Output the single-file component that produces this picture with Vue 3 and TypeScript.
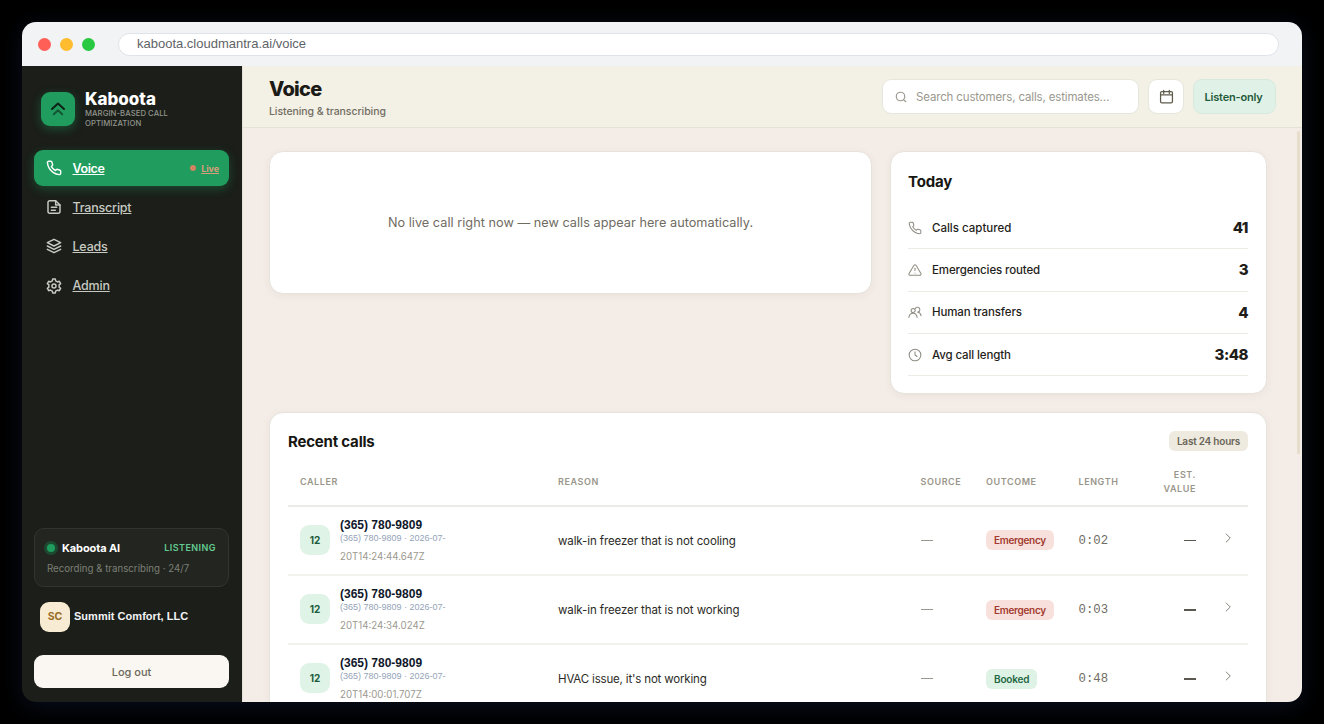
<script setup lang="ts">
interface NavItem { label: string; icon: string[]; live?: boolean }
interface Stat { label: string; value: string; icon: string[]; cls: string }
interface Call { time: string; reason: string; outcome: string; tone: string; length: string; cls: string }

const phone = 'M22 16.92v3a2 2 0 0 1-2.18 2 19.79 19.79 0 0 1-8.63-3.07 19.5 19.5 0 0 1-6-6 19.79 19.79 0 0 1-3.07-8.67A2 2 0 0 1 4.11 2h3a2 2 0 0 1 2 1.72c.127.96.361 1.903.7 2.81a2 2 0 0 1-.45 2.11L8.09 9.91a16 16 0 0 0 6 6l1.27-1.27a2 2 0 0 1 2.11-.45c.907.339 1.85.573 2.81.7A2 2 0 0 1 22 16.92z'

const nav: NavItem[] = [
  { label: 'Voice', icon: [phone], live: true },
  { label: 'Transcript', icon: ['M14.500 2.500H5.500a2.500 2.500 0 0 0-2.500 2.500v14a2.500 2.500 0 0 0 2.500 2.500h13a2.500 2.500 0 0 0 2.500-2.500V9z', 'M14.500 2.500v6.500h6.500', 'M8 12.500h8M8 17h6'] },
  { label: 'Leads', icon: ['M12 2L2 7l10 5 10-5z', 'M2 12l10 5 10-5', 'M2 17l10 5 10-5'] },
  { label: 'Admin', icon: ['M9.500 4.400L10 1.500h4l.5 2.900 2.700 1.550 2.800-1 2 3.450-2.300 1.900v3.400l2.300 1.900-2 3.450-2.800-1-2.700 1.550-.5 2.900h-4l-.5-2.900-2.700-1.550-2.800 1-2-3.450 2.300-1.900v-3.400L2 8.400l2-3.450 2.800 1z', 'M15 12a3 3 0 1 1-6 0 3 3 0 0 1 6 0z'] },
]

const stats: Stat[] = [
  { label: 'Calls captured', value: '41', icon: [phone], cls: 's1' },
  { label: 'Emergencies routed', value: '3', icon: ['M10.290 3.860L1.820 18a2 2 0 0 0 1.710 3h16.940a2 2 0 0 0 1.710-3L13.710 3.860a2 2 0 0 0-3.420 0z', 'M12 9v4', 'M12 17h.01'], cls: 's2' },
  { label: 'Human transfers', value: '4', icon: ['M12.300 9.500a3.500 3.500 0 1 1-7 0 3.500 3.500 0 0 1 7 0z', 'M1.500 21.500c.5-5 3.200-7.500 7.200-7.500s6.400 2.500 6.900 7.500', 'M12.300 6.500a4.200 4.200 0 1 1 4.500 5.700', 'M17.500 12.300c3 .8 4.500 3 4.800 6.200'], cls: 's3' },
  { label: 'Avg call length', value: '3:48', icon: ['M22 12a10 10 0 1 1-20 0 10 10 0 0 1 20 0z', 'M12 6.500V12l3.500 2.500'], cls: 's4' },
]

const calls: Call[] = [
  { time: '20T14:24:44.647Z', reason: 'walk-in freezer that is not cooling', outcome: 'Emergency', tone: 'red', length: '0:02', cls: 'r1' },
  { time: '20T14:24:34.024Z', reason: 'walk-in freezer that is not working', outcome: 'Emergency', tone: 'red', length: '0:03', cls: 'r2' },
  { time: '20T14:00:01.707Z', reason: "HVAC issue, it's not working", outcome: 'Booked', tone: 'green', length: '0:48', cls: 'r3' },
]
</script>

<template>
  <div class="stage">
    <div class="window">
      <div class="chrome">
        <i class="dot d-red"></i><i class="dot d-yellow"></i><i class="dot d-green"></i>
        <div class="url"><span>kaboota.cloudmantra.ai/voice</span></div>
      </div>
      <div class="app">
        <aside class="side">
          <div class="brand">
            <div class="logo">
              <svg width="18" height="18" viewBox="0 0 18 18">
                <path d="M3 9L9 3.600l6 5.400" stroke="#0d2217" stroke-width="2" />
                <path d="M4.800 14.200L9 10.300l4.200 3.900" stroke="#145534" stroke-width="2" />
              </svg>
            </div>
            <div>
              <div class="brand-name"><span>Kaboota</span></div>
              <div class="brand-sub"><span>MARGIN-BASED CALL</span><br /><span>OPTIMIZATION</span></div>
            </div>
          </div>
          <nav>
            <a v-for="n in nav" :key="n.label" class="nav-item" :class="{ active: n.live }">
              <svg class="nav-icon" viewBox="0 0 24 24"><path v-for="d in n.icon" :key="d" :d="d" /></svg>
              <span class="nav-label">{{ n.label }}</span>
              <span v-if="n.live" class="live"><i></i><span>Live</span></span>
            </a>
          </nav>
          <div class="status">
            <div class="status-top">
              <i class="pulse"></i><span class="status-name">Kaboota AI</span><span class="listening">LISTENING</span>
            </div>
            <div class="status-sub"><span>Recording &amp; transcribing · 24/7</span></div>
          </div>
          <div class="org"><div class="org-avatar">SC</div><span class="org-name">Summit Comfort, LLC</span></div>
          <button class="logout"><span>Log out</span></button>
        </aside>

        <main class="main">
          <header class="top">
            <div>
              <h1><span>Voice</span></h1>
              <div class="sub"><span>Listening &amp; transcribing</span></div>
            </div>
            <div class="tools">
              <div class="search">
                <svg viewBox="0 0 24 24"><circle cx="11" cy="11" r="8.500" /><path d="M21.500 21.500l-4.300-4.300" /></svg>
                <span>Search customers, calls, estimates…</span>
              </div>
              <div class="cal">
                <svg viewBox="0 0 24 24"><rect x="2.500" y="4" width="19" height="18" rx="2" /><path d="M2.500 9.500h19M7.500 2v5M16.500 2v5" /></svg>
              </div>
              <div class="listen"><span>Listen-only</span></div>
            </div>
          </header>

          <div class="content">
            <div class="row">
              <section class="card empty"><span>No live call right now — new calls appear here automatically.</span></section>
              <section class="card today">
                <h2><span>Today</span></h2>
                <div v-for="s in stats" :key="s.label" class="stat">
                  <svg viewBox="0 0 24 24"><path v-for="d in s.icon" :key="d" :d="d" /></svg>
                  <span class="stat-label" :class="s.cls">{{ s.label }}</span>
                  <b>{{ s.value }}</b>
                </div>
              </section>
            </div>

            <section class="card recent">
              <div class="recent-head">
                <h2><span>Recent calls</span></h2>
                <span class="chip"><span>Last 24 hours</span></span>
              </div>
              <div class="grid thead">
                <span>CALLER</span><span>REASON</span><span>SOURCE</span><span>OUTCOME</span><span>LENGTH</span>
                <span class="est">EST.<br />VALUE</span><span></span>
              </div>
              <div v-for="c in calls" :key="c.time" class="grid trow">
                <div class="caller">
                  <div class="num">12</div>
                  <div class="who">
                    <div class="phone"><span>(365) 780-9809</span></div>
                    <div class="meta"><span>(365) 780-9809 · 2026-07-</span></div>
                    <div class="time"><span>{{ c.time }}</span></div>
                  </div>
                </div>
                <div class="reason"><span :class="c.cls">{{ c.reason }}</span></div>
                <div><i class="dash"></i></div>
                <div class="outcome"><span class="tag" :class="c.tone">{{ c.outcome }}</span></div>
                <div class="len">{{ c.length }}</div>
                <div class="value"><i class="dash dark"></i></div>
                <svg class="chev" viewBox="0 0 24 24"><path d="M8.500 4l8 8-8 8" /></svg>
              </div>
            </section>
            <i class="thumb"></i>
          </div>
        </main>
      </div>
    </div>
  </div>
</template>

<style>
html, body { margin: 0; background: #000; }
</style>

<style scoped>
* { box-sizing: border-box; }
.stage { width: 1324px; height: 724px; padding: 22px; background: #000; overflow: hidden; font-family: Inter, "Liberation Sans", sans-serif; }
.window { width: 1280px; height: 680px; border-radius: 14px; overflow: hidden; display: flex; flex-direction: column; box-shadow: 0 4px 22px rgba(12, 20, 40, .75); }
span { white-space: nowrap; }
svg { fill: none; stroke: currentColor; stroke-width: 2; stroke-linecap: round; stroke-linejoin: round; flex: none; }

.chrome { height: 44px; flex: none; background: #f1f3f5; display: flex; align-items: center; padding: 0 23px 0 16px; }
.dot { width: 13px; height: 13px; border-radius: 50%; margin-right: 9px; }
.d-red { background: #ff5f57; }
.d-yellow { background: #febc2e; }
.d-green { background: #28c840; }
.url { flex: 1; height: 23px; margin-left: 14px; border: 1px solid #dfe2e8; border-radius: 12px; background: #fff; padding-left: 18px; font: 13px/20px "Liberation Sans", sans-serif; color: #5f6368; }

.app { flex: 1; display: flex; min-height: 0; }
.side { width: 220px; flex: none; background: #1b1e19; padding: 24px 13px 14px 12px; display: flex; flex-direction: column; color: #fff; }
.brand { display: flex; gap: 10px; height: 60px; padding-left: 7px; }
.logo { width: 34px; height: 34px; margin-top: 2px; border-radius: 9px; background: #209d5e; display: grid; place-items: center; box-shadow: 0 3px 10px rgba(32, 157, 94, .4); }
.brand-name { font-size: 17px; line-height: 18px; font-weight: 800; letter-spacing: -.02px; }
.brand-sub { font-size: 7.700px; line-height: 10px; color: #92948c; letter-spacing: .06px; font-weight: 500; margin-top: 1px; }
nav { display: flex; flex-direction: column; gap: 3.200px; }
.nav-item { height: 36px; border-radius: 9px; display: flex; align-items: center; padding: 0 10px 0 11.500px; color: #c8cac2; }
.nav-item.active { background: #209d5e; color: #fff; box-shadow: 0 3px 10px rgba(32, 157, 94, .35); }
.nav-icon { width: 16px; height: 16px; margin-right: 11px; stroke-width: 2.200; }
.nav-label { font-size: 12.500px; font-weight: 500; letter-spacing: -.2px; text-decoration: underline; }
.active .nav-label { font-weight: 600; letter-spacing: -.4px; }
.live { margin-left: auto; display: flex; align-items: center; gap: 5px; color: #d99c7c; font-size: 9px; font-weight: 700; letter-spacing: -.1px; text-decoration: underline; }
.live i { width: 6px; height: 6px; border-radius: 50%; background: #d08464; }
.status { margin-top: auto; height: 59px; border: 1px solid #32352f; border-radius: 10px; background: #232620; padding: 10px 12px 0; }
.status-top { display: flex; align-items: center; height: 17px; }
.pulse { width: 8px; height: 8px; border-radius: 50%; background: #209d5e; box-shadow: 0 0 0 3px #1b4a30; margin-right: 7px; }
.status-name { font-size: 11px; font-weight: 700; letter-spacing: -.1px; }
.listening { margin-left: auto; font-size: 9px; font-weight: 600; letter-spacing: .45px; color: #63cb92; }
.status-sub { font-size: 9.700px; line-height: 14px; color: #7c7f76; margin-top: 6px; }
.org { display: flex; align-items: center; gap: 4px; padding-left: 6px; margin-top: 14px; height: 31px; }
.org-avatar { width: 30px; height: 30px; border-radius: 9px; background: #f8ebd3; color: #986b24; font-size: 10.500px; font-weight: 700; display: grid; place-items: center; }
.org-name { font: bold 11px "Liberation Sans", sans-serif; color: #f1f3f5; letter-spacing: .03px; padding-bottom: 2px; }
.logout { margin-top: 23px; height: 33px; border: 0; border-radius: 9px; background: #faf7f2; color: #6b675b; font: 500 11px Inter, sans-serif; padding: 0; flex: none; }

.main { flex: 1; min-width: 0; display: flex; flex-direction: column; border-left: 1px solid #e5e1d9; background: #f4ece7; }
.top { height: 62px; flex: none; background: #f3f0e6; border-bottom: 1px solid #e4e1d7; display: flex; justify-content: space-between; padding: 12px 26px 0; }
h1 { margin: 0; font-size: 20px; line-height: 22px; font-weight: 800; letter-spacing: -.7px; color: #1b1a16; }
.sub { font-size: 10.500px; line-height: 14px; margin-top: 5px; color: #716d61; font-weight: 500; letter-spacing: -.07px; }
.tools { display: flex; gap: 9px; margin-top: 1px; height: 35px; }
.search, .cal, .listen { border: 1px solid #e6e6dc; border-radius: 9px; background: #fff; display: flex; align-items: center; height: 35px; }
.search { width: 257px; padding-left: 12px; color: #9a988e; font-size: 11.500px; letter-spacing: -.15px; }
.search svg { width: 12px; height: 12px; margin-right: 9px; stroke-width: 2.300; }
.cal { width: 36px; justify-content: center; color: #5f5b4c; }
.cal svg { width: 15px; height: 15px; }
.listen { width: 83px; justify-content: center; background: #e0f2e7; border-color: #d5eadd; color: #1f5a3b; font-size: 11px; font-weight: 600; letter-spacing: -.2px; padding-right: 2px; }

.content { flex: 1; min-height: 0; position: relative; padding: 23px 36px 0 26px; overflow: hidden; }
.row { display: flex; gap: 18px; align-items: flex-start; }
.card { background: #fff; border: 1px solid #e6e3db; border-radius: 14px; box-shadow: 0 2px 8px rgba(80, 60, 40, .05); }
.empty { width: 603px; flex: none; height: 143px; display: grid; place-items: center; font-size: 12.700px; letter-spacing: .03px; color: #6f6c62; }
.today { flex: 1; height: 243px; padding: 19px 18px 0 17px; margin-right: -1px; }
h2 { margin: 0; font-size: 15px; line-height: 22px; font-weight: 700; letter-spacing: -.2px; color: #171612; }
.today h2 { margin-bottom: 14px; }
.stat { height: 42.300px; display: flex; align-items: center; border-bottom: 1px solid #ebeae5; color: #1f1e1a; }
.stat svg { width: 14px; height: 14px; color: #8f8d83; margin-right: 10px; stroke-width: 1.800; }
.stat-label { font-size: 11.500px; font-weight: 500; letter-spacing: -.12px; }
.s1 { letter-spacing: 0; }
.stat b { margin-left: auto; font-size: 15px; font-weight: 800; letter-spacing: -.5px; }

.recent { margin-top: 18px; margin-right: -1px; height: 420px; padding: 18px 18px 0; }
.recent-head { display: flex; justify-content: space-between; align-items: flex-start; height: 20px; }
.chip { height: 20px; border-radius: 6px; background: #efeae0; width: 79px; display: grid; place-items: center; font-size: 10px; font-weight: 600; letter-spacing: -.22px; color: #6a6658; }
.grid { display: grid; grid-template-columns: 258px 362.500px 65.500px 92.500px 85.500px 44px 52px; padding-left: 12px; width: 960px; align-items: center; }
.thead { height: 55.500px; padding-top: 8px; font-size: 9px; line-height: 14px; font-weight: 600; letter-spacing: .58px; color: #99968a; border-bottom: 2px solid #ebebe8; }
.est { text-align: right; justify-self: end; padding-right: 12px; }
.trow { height: 69.200px; border-bottom: 2px solid #f1f1ee; padding-top: 1px; }
.caller { display: flex; gap: 10px; align-items: center; }
.who { padding-top: 3px; }
.num { width: 30px; height: 30px; margin-top: -2px; border-radius: 9px; background: #e0f3e7; color: #1c5c3a; font-size: 10px; font-weight: 700; display: grid; place-items: center; }
.phone { font: bold 12px/14px "Liberation Sans", sans-serif; color: #0f172a; }
.meta { font: 9px/12px "Liberation Sans", sans-serif; color: #94a3b8; }
.time { font-size: 9.700px; line-height: 25px; height: 22px; color: #9c998f; }
.reason { font-size: 11.500px; letter-spacing: -.1px; color: #2b2a26; padding-top: 1px; }
.r3 { letter-spacing: -.17px; }
.dash { display: block; width: 12px; height: 1px; background: #99978f; }
.dash.dark { background: #5a5850; height: 1.500px; margin-left: auto; }
.value { padding-right: 12px; }
.outcome { margin-top: -2px; }
.tag { display: inline-block; height: 20px; line-height: 20px; border-radius: 6px; padding: 0 8px; font-size: 10px; font-weight: 600; letter-spacing: -.3px; vertical-align: middle; }
.red { background: #f8e1dc; color: #a23a2f; }
.green { background: #dff2e6; color: #1f6843; letter-spacing: -.2px; }
.len { font: 12.300px "Liberation Mono", monospace; color: #6f6c64; padding-top: 1px; }
.chev { width: 12px; height: 12px; color: #85827a; margin-left: 14px; margin-top: -5px; }
.thumb { position: absolute; right: 2px; top: 3px; width: 3px; height: 323px; border-radius: 2px; background: #e6ddcb; }
</style>
